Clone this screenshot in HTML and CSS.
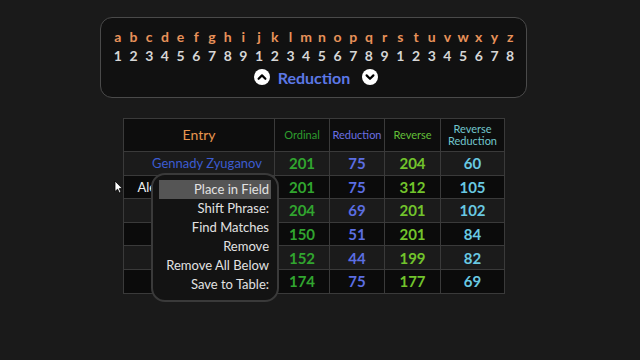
FILE: index.html
```html
<!DOCTYPE html>
<html lang="en">
<head>
    <meta charset="UTF-8">
    <meta name="viewport" content="width=device-width, initial-scale=1.0">
    <title>Gematria Ciphers</title>
    <link rel="stylesheet" href="styles.css">
</head>
<body>

    <div class="page">
        <!-- Cipher chart -->
        <div class="cipher">
            <div class="letters">
                <span>a</span><span>b</span><span>c</span><span>d</span><span>e</span><span>f</span><span>g</span><span>h</span><span>i</span><span>j</span><span>k</span><span>l</span><span>m</span>
                <span>n</span><span>o</span><span>p</span><span>q</span><span>r</span><span>s</span><span>t</span><span>u</span><span>v</span><span>w</span><span>x</span><span>y</span><span>z</span>
            </div>
            <div class="digits">
                <span>1</span><span>2</span><span>3</span><span>4</span><span>5</span><span>6</span><span>7</span><span>8</span><span>9</span><span>1</span><span>2</span><span>3</span><span>4</span>
                <span>5</span><span>6</span><span>7</span><span>8</span><span>9</span><span>1</span><span>2</span><span>3</span><span>4</span><span>5</span><span>6</span><span>7</span><span>8</span>
            </div>
            <div class="cipher-name">
                <svg class="arrow-btn" width="16" height="16" viewBox="0 0 16 16">
                    <circle cx="8" cy="8" r="8" fill="#fff"/>
                    <path d="M4.6 9.8 L8 6.4 L11.4 9.8" fill="none" stroke="#000" stroke-width="2.2" stroke-linecap="round" stroke-linejoin="round"/>
                </svg>
                <span class="name">Reduction</span>
                <svg class="arrow-btn down" width="16" height="16" viewBox="0 0 16 16">
                    <circle cx="8" cy="8" r="8" fill="#fff"/>
                    <path d="M4.6 6.4 L8 9.8 L11.4 6.4" fill="none" stroke="#000" stroke-width="2.2" stroke-linecap="round" stroke-linejoin="round"/>
                </svg>
            </div>
        </div>

        <!-- Phrase table -->
        <div class="table-wrap">
            <table class="phrases">
                <tr class="head">
                    <th class="entry-head">Entry</th>
                    <th class="c-ord">Ordinal</th>
                    <th class="c-red">Reduction</th>
                    <th class="c-rev">Reverse</th>
                    <th class="c-rr">Reverse<br>Reduction</th>
                </tr>
                <tr class="light">
                    <td class="entry blue">Gennady Zyuganov</td>
                    <td class="n-ord">201</td><td class="n-red">75</td><td class="n-rev">204</td><td class="n-rr">60</td>
                </tr>
                <tr class="dark">
                    <td class="entry">Aleksandr Lukashenko</td>
                    <td class="n-ord">201</td><td class="n-red">75</td><td class="n-rev">312</td><td class="n-rr">105</td>
                </tr>
                <tr class="light">
                    <td class="entry">Pavel Grudinin</td>
                    <td class="n-ord">204</td><td class="n-red">69</td><td class="n-rev">201</td><td class="n-rr">102</td>
                </tr>
                <tr class="dark">
                    <td class="entry">Boris Titov</td>
                    <td class="n-ord">150</td><td class="n-red">51</td><td class="n-rev">201</td><td class="n-rr">84</td>
                </tr>
                <tr class="light">
                    <td class="entry">Sergey Baburin</td>
                    <td class="n-ord">152</td><td class="n-red">44</td><td class="n-rev">199</td><td class="n-rr">82</td>
                </tr>
                <tr class="dark">
                    <td class="entry">Maxim Suraykin</td>
                    <td class="n-ord">174</td><td class="n-red">75</td><td class="n-rev">177</td><td class="n-rr">69</td>
                </tr>
            </table>

            <!-- right-click menu over the table -->
            <div class="context-menu">
                <div class="menu-item active">Place in Field</div>
                <div class="menu-item">Shift Phrase:</div>
                <div class="menu-item">Find Matches</div>
                <div class="menu-item">Remove</div>
                <div class="menu-item">Remove All Below</div>
                <div class="menu-item">Save to Table:</div>
            </div>

            <svg class="cursor" width="9" height="14" viewBox="0 0 9 14">
                <path d="M1 1 L1 11.5 L3.6 9.2 L5.4 13 L7 12.3 L5.3 8.6 L8.4 8.6 Z" fill="#fff" stroke="#000" stroke-width="0.8"/>
            </svg>
        </div>
    </div>

</body>
</html>
```

FILE: styles.css
```css
body {
    margin: 0;
    background-color: #1a1a1a;
    font-family: Lato, "Open Sans", Arial, sans-serif;
    color: #e0e0e0;
}

.page {
    width: 640px;
    height: 360px;
    padding-top: 17px;
    box-sizing: border-box;
    overflow: hidden;
}

/* cipher box */
.cipher {
    width: 427px;
    margin-left: 100px;
    box-sizing: border-box;
    padding: 9px 8px 8px 9px;
    border: 1px solid #4a4a4a;
    border-radius: 12px;
    background-color: #111;
}

.letters, .digits {
    display: grid;
    grid-template-columns: repeat(26, 1fr);
    text-align: center;
    font-size: 14px;
    font-weight: bold;
    line-height: 19px;
}

.letters {
    color: #e8925a;
}

.digits {
    color: #d6d6d6;
}

.cipher-name {
    display: flex;
    align-items: center;
    justify-content: center;
    height: 24px;
    margin-left: 4px;
}

.cipher-name .name {
    color: #5c78e6;
    font-size: 16px;
    font-weight: bold;
    margin: 0 12px 0 8px;
}

.arrow-btn {
    display: block;
}

/* table */
.table-wrap {
    position: relative;
    margin-top: 20px;
    margin-left: 123px;
    width: 382px;
}

.phrases {
    border-collapse: collapse;
    width: 382px;
    table-layout: fixed;
}

.phrases th, .phrases td {
    border: 1px solid #3a3a3a;
    text-align: center;
    padding: 0;
}

.phrases th {
    height: 32px;
    font-weight: normal;
    font-size: 11px;
    line-height: 12px;
    background-color: #0d0d0d;
}

.phrases td {
    height: 22.6px;
    font-size: 15px;
    font-weight: bold;
}

.phrases th:nth-child(1) { width: 150px; }
.phrases th:nth-child(2) { width: 54px; }
.phrases th:nth-child(3) { width: 54px; }
.phrases th:nth-child(4) { width: 55px; }

.entry-head {
    color: #e8964f;
    font-size: 14px !important;
}

.c-ord { color: #2d9d2d; }
.c-red { color: #6b6fe2; }
.c-rev { color: #62bf38; }
.c-rr { color: #72c6cc; }

.n-ord { color: #31a52f; }
.n-red { color: #5b6ee2; }
.n-rev { color: #72c42c; }
.n-rr { color: #69c9e2; }

tr.light td { background-color: #1b1b1b; }
tr.dark td { background-color: #0b0b0b; }

.phrases td.entry {
    font-size: 13px;
    font-weight: normal;
    color: #f0f0f0;
    white-space: nowrap;
    overflow: hidden;
    padding-left: 16px;
}

.phrases td.entry.blue {
    color: #3c5cd0;
}

.phrases tr.dark td.entry:not(.blue) {
    padding-left: 4px;
}

/* context menu */
.context-menu {
    position: absolute;
    left: 28px;
    top: 55px;
    width: 128px;
    box-sizing: border-box;
    padding: 5px 6px 6px 6px;
    border: 2px solid #3a3a3a;
    border-radius: 14px;
    background-color: #131313;
}

.menu-item {
    text-align: right;
    font-size: 13px;
    line-height: 19px;
    padding-right: 2px;
    color: #e2e2e2;
    white-space: nowrap;
}

.menu-item.active {
    background-color: #555;
}

.cursor {
    position: absolute;
    left: -9px;
    top: 62px;
}
```
